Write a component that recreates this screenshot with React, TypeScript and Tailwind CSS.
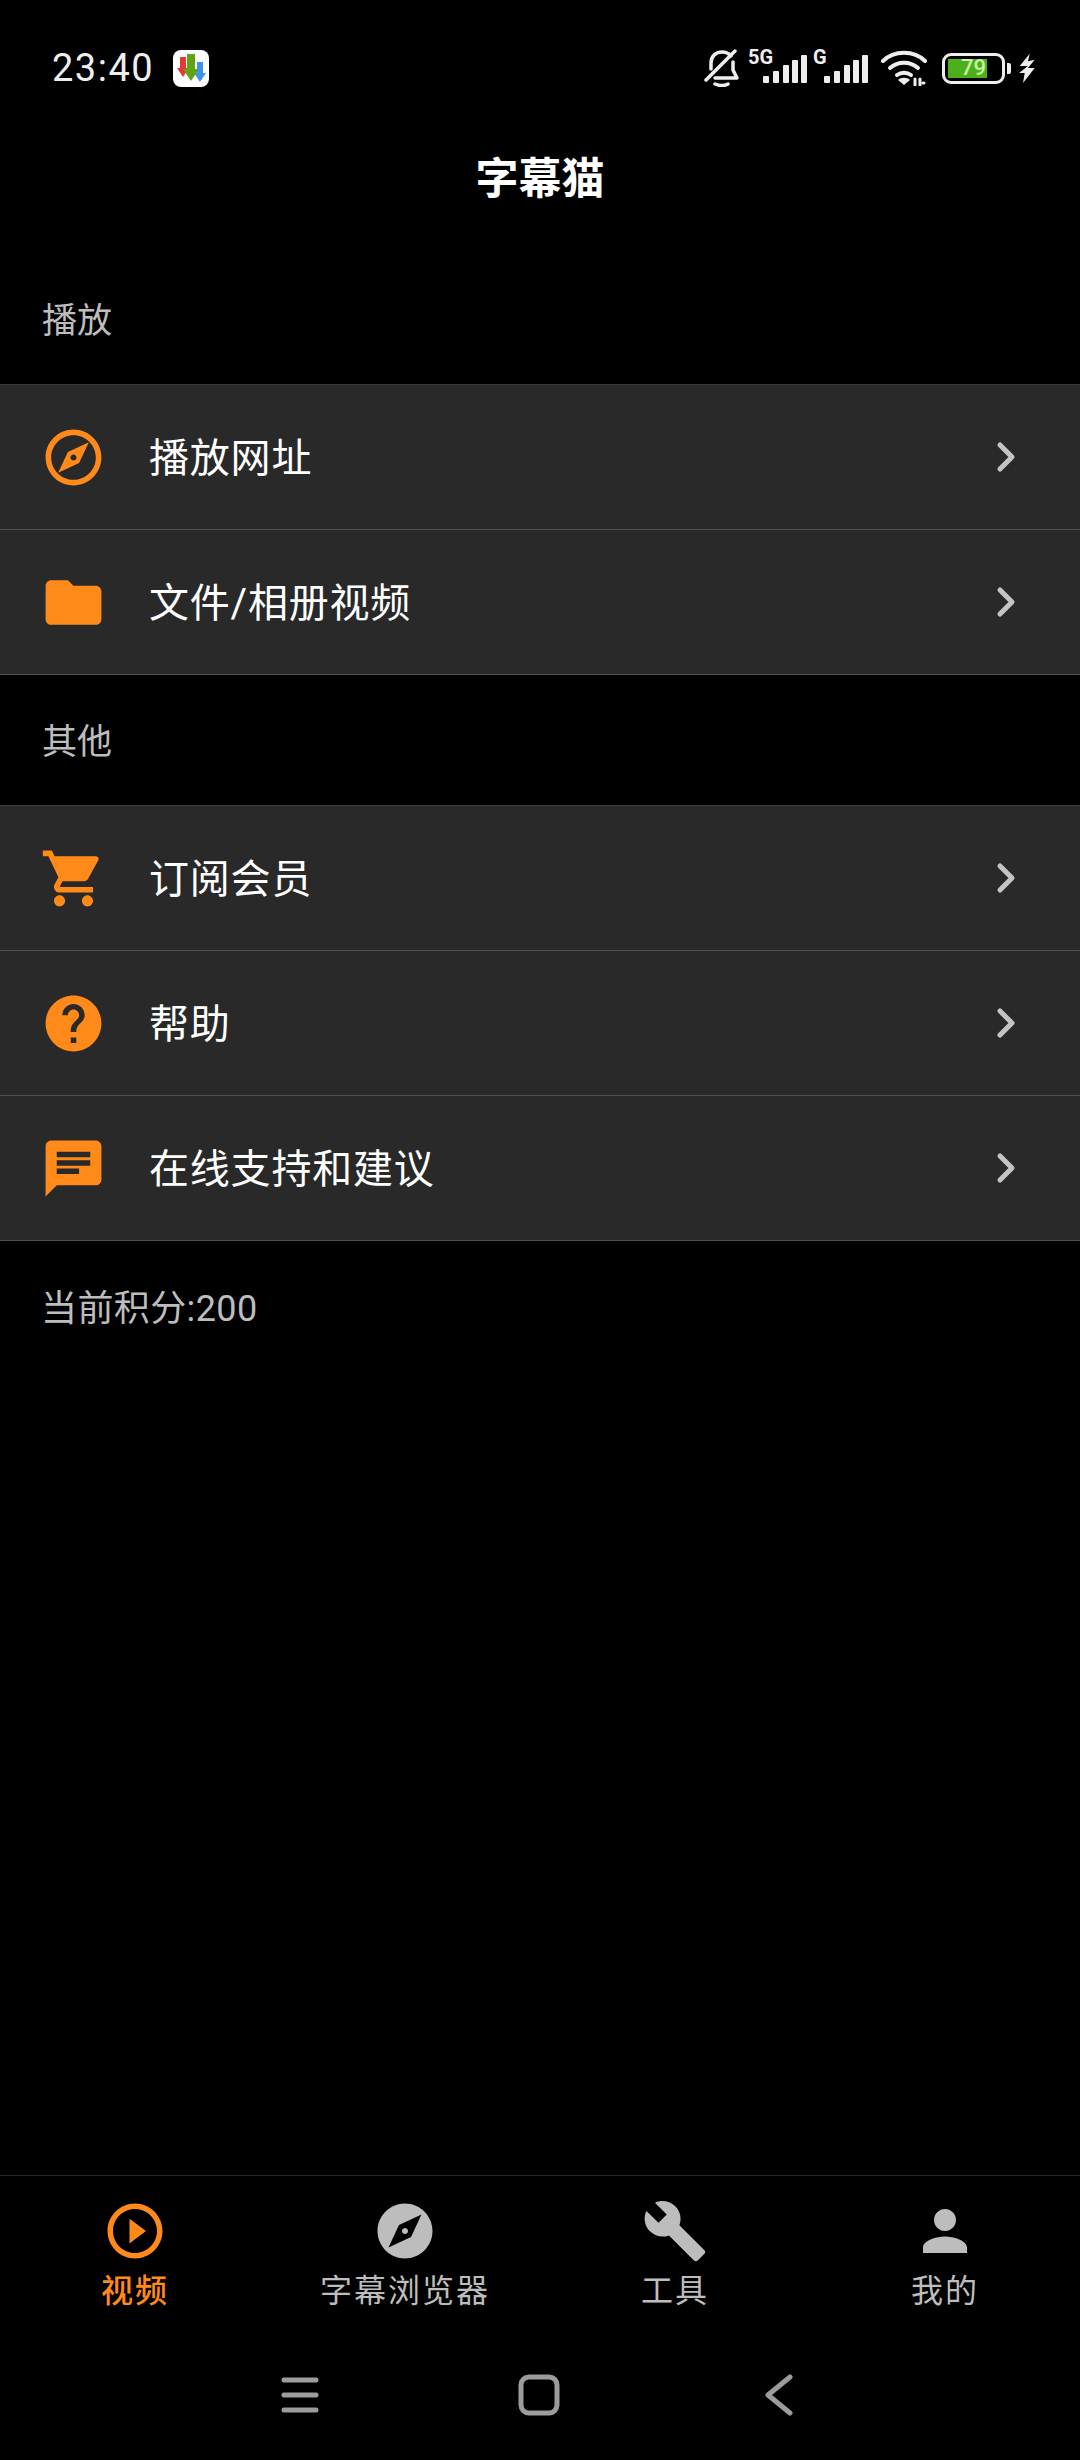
import type { ReactNode } from 'react';

const FONT = 'font-["Roboto","Noto_Sans_CJK_SC",sans-serif]';

const paths = {
  explore:
    'M12 2C6.48 2 2 6.48 2 12s4.48 10 10 10 10-4.48 10-10S17.52 2 12 2zm0 18c-4.41 0-8-3.59-8-8s3.59-8 8-8 8 3.59 8 8-3.59 8-8 8zm-5.5-2.5l7.51-3.49L17.5 6.5 9.99 9.99 6.5 17.5zm5.5-6.6c.61 0 1.1.49 1.1 1.1s-.49 1.1-1.1 1.1-1.1-.49-1.1-1.1.49-1.1 1.1-1.1z',
  exploreFilled:
    'M12 10.9c-.61 0-1.1.49-1.1 1.1s.49 1.1 1.1 1.1c.61 0 1.1-.49 1.1-1.1s-.49-1.1-1.1-1.1zM12 2C6.48 2 2 6.48 2 12s4.48 10 10 10 10-4.48 10-10S17.52 2 12 2zm2.19 12.19L6 18l3.81-8.19L18 6l-3.81 8.19z',
  folder: 'M10 4H4c-1.1 0-1.99.9-1.99 2L2 18c0 1.1.9 2 2 2h16c1.1 0 2-.9 2-2V8c0-1.1-.9-2-2-2h-8l-2-2z',
  cart:
    'M7 18c-1.1 0-1.99.9-1.99 2S5.9 22 7 22s2-.9 2-2-.9-2-2-2zM1 2v2h2l3.6 7.59-1.35 2.45c-.16.28-.25.61-.25.96 0 1.1.9 2 2 2h12v-2H7.42c-.14 0-.25-.11-.25-.25l.03-.12.9-1.63h7.45c.75 0 1.41-.41 1.75-1.03l3.58-6.49c.08-.14.12-.31.12-.48 0-.55-.45-1-1-1H5.21l-.94-2H1zm16 16c-1.1 0-1.99.9-1.99 2s.89 2 1.99 2 2-.9 2-2-.9-2-2-2z',
  help:
    'M12 2C6.48 2 2 6.48 2 12s4.48 10 10 10 10-4.48 10-10S17.52 2 12 2zm1 17h-2v-2h2v2zm2.07-7.75l-.9.92C13.45 12.9 13 13.5 13 15h-2v-.5c0-1.1.45-2.1 1.17-2.83l1.24-1.26c.37-.36.59-.86.59-1.41 0-1.1-.9-2-2-2s-2 .9-2 2H8c0-2.21 1.79-4 4-4s4 1.79 4 4c0 .88-.36 1.68-.93 2.25z',
  chat: 'M20 2H4c-1.1 0-1.99.9-1.99 2L2 22l4-4h14c1.1 0 2-.9 2-2V4c0-1.1-.9-2-2-2zM6 9h12v2H6V9zm8 5H6v-2h8v2zm4-6H6V6h12v2z',
  play:
    'M10 16.5l6-4.5-6-4.5v9zM12 2C6.48 2 2 6.48 2 12s4.48 10 10 10 10-4.48 10-10S17.52 2 12 2zm0 18c-4.41 0-8-3.59-8-8s3.59-8 8-8 8 3.59 8 8-3.59 8-8 8z',
  build:
    'M22.7 19l-9.1-9.1c.9-2.3.4-5-1.5-6.9-2-2-5-2.4-7.4-1.3L9 6 6 9 1.6 4.7C.4 7.1.9 10.1 2.9 12.1c1.9 1.9 4.6 2.4 6.9 1.5l9.1 9.1c.4.4 1 .4 1.4 0l2.3-2.3c.5-.4.5-1.1.1-1.4z',
  person: 'M12 12c2.21 0 4-1.79 4-4s-1.79-4-4-4-4 1.79-4 4 1.79 4 4 4zm0 2c-2.67 0-8 1.34-8 4v2h16v-2c0-2.66-5.33-4-8-4z',
};

function MdIcon({ d, className }: { d: string; className: string }) {
  return (
    <svg viewBox="0 0 24 24" fill="currentColor" className={className}>
      <path d={d} />
    </svg>
  );
}

function Signal({ label, labelClass }: { label: string; labelClass: string }) {
  return (
    <div className="relative w-[44px] h-[36px] mb-[6px]">
      <span className={`absolute top-[0px] text-[20px] leading-[20px] font-bold text-[#eeeeee] ${labelClass}`}>{label}</span>
      <svg viewBox="0 0 44 28" className="absolute bottom-0 left-0 w-[44px] h-[28px]" fill="#eeeeee">
        <rect x="0" y="21" width="6" height="7" rx="1" />
        <rect x="10" y="16" width="6" height="12" rx="1" />
        <rect x="20" y="10" width="6" height="18" rx="1" />
        <rect x="29" y="5" width="6" height="23" rx="1" />
        <rect x="38" y="0" width="6" height="28" rx="1" />
      </svg>
    </div>
  );
}

function StatusBar() {
  return (
    <div className="h-[136px] pl-[52px] pr-[44px] flex items-center justify-between">
      <div className="flex items-center gap-[19px]">
        <span className="text-[38px] leading-none tracking-[1.5px] text-[#eeeeee]">23:40</span>
        <div className="w-[36px] h-[37px] rounded-[8px] bg-white flex items-center justify-center">
          <svg viewBox="0 0 36 37" className="w-[36px] h-[37px]">
            <path d="M7 7h6v11h3l-6 9-6-9h3z" fill="#e53935" />
            <path d="M24 12h6v11h3l-6 9-6-9h3z" fill="#3d93f0" />
            <path d="M14 4h8v15h4l-8 12-8-12h4z" fill="#5fa413" />
          </svg>
        </div>
      </div>
      <div className="flex items-center">
        <svg viewBox="0 0 36 38" className="w-[36px] h-[38px]" fill="none" stroke="#eeeeee" strokeWidth="3.5" strokeLinecap="round" strokeLinejoin="round">
          <path d="M7 20v-6C7 7 12 3 18 3c4 0 7 1.500 9 4" />
          <path d="M29 13v8l4 8H11" />
          <path d="M11 35q7 3 13 0" />
          <path d="M2 31L31 2" />
        </svg>
        <div className="ml-[23px]">
          <Signal label="5G" labelClass="left-[-15px]" />
        </div>
        <div className="ml-[17px]">
          <Signal label="G" labelClass="left-[-11px]" />
        </div>
        <svg viewBox="0 0 46 36" className="ml-[13px] w-[46px] h-[36px]" fill="none" stroke="#eeeeee" strokeLinecap="round">
          <path d="M2 11C13 0 33 0 44 11" strokeWidth="4" />
          <path d="M9 18c8-7 20-7 28 0" strokeWidth="4" />
          <path d="M16 25c4-3 10-3 14 0" strokeWidth="4" />
          <path d="M23 35l-6-5c3-3 9-3 12 0z" fill="#eeeeee" strokeWidth="0" />
          <path d="M34 35v-6M39 35v-6M42 33h1" strokeWidth="3" />
        </svg>
        <div className="ml-[15px] w-[63px] h-[31px] rounded-[9px] border-[3px] border-[#eeeeee] p-[3px] flex">
          <div className="w-[39px] bg-[#4caf1c] flex items-center justify-end pr-[1px]">
            <span className="text-[22px] leading-none font-medium text-[#c9f2a2]">79</span>
          </div>
        </div>
        <div className="ml-[2px] w-[4px] h-[11px] rounded-r-[2px] bg-[#eeeeee]" />
        <svg viewBox="0 0 17 30" className="ml-[8px] w-[17px] h-[30px]" fill="#eeeeee">
          <path d="M10.700.7L.7 13H9l-9 7h5.700L4 30l11.700-15H9l6.700-8.300L9 8.300z" />
        </svg>
      </div>
    </div>
  );
}

function SectionLabel({ children, className }: { children: ReactNode; className: string }) {
  return <div className={`h-[130px] pt-[6px] flex items-center text-[#bdbdbd] ${className}`}>{children}</div>;
}

function Row({ icon, title }: { icon: string; title: string }) {
  return (
    <div className="h-[145px] pl-[40px] pr-[62px] flex items-center border-b border-[#505050]">
      <MdIcon d={icon} className="w-[67px] h-[67px] text-[#ff8a19]" />
      <span className="ml-[42px] pt-[3px] flex-1 text-[40px] tracking-[0.8px] text-white">{title}</span>
      <svg viewBox="0 0 22 32" className="w-[22px] h-[32px]" fill="none" stroke="#c4c4c4" strokeWidth="5" strokeLinecap="round" strokeLinejoin="round">
        <path d="M4 4l12 12L4 28" />
      </svg>
    </div>
  );
}

function Tab({ icon, label, active }: { icon: string; label: string; active?: boolean }) {
  return (
    <div className={`flex-1 flex flex-col items-center ${active ? 'text-[#ff8a19]' : 'text-[#bdbdbd]'}`}>
      <MdIcon d={icon} className="w-[66px] h-[66px]" />
      <span className={`mt-[5px] text-[32px] leading-[44px] tracking-[2px] ${active ? 'font-medium' : ''}`}>{label}</span>
    </div>
  );
}

export default function App() {
  return (
    <div className={`w-[1080px] h-[2460px] bg-black flex flex-col ${FONT}`}>
      <StatusBar />
      <div className="h-[84px] mb-[34px] pt-[3px] flex items-center justify-center text-[43px] font-bold text-white">字幕猫</div>

      <SectionLabel className="pl-[42px] text-[35px]">播放</SectionLabel>
      <div className="bg-[#292929] border-t border-[#3a3a3a]">
        <Row icon={paths.explore} title="播放网址" />
        <Row icon={paths.folder} title="文件/相册视频" />
      </div>

      <SectionLabel className="pl-[42px] text-[35px]">其他</SectionLabel>
      <div className="bg-[#292929] border-t border-[#3a3a3a]">
        <Row icon={paths.cart} title="订阅会员" />
        <Row icon={paths.help} title="帮助" />
        <Row icon={paths.chat} title="在线支持和建议" />
      </div>

      <SectionLabel className="pl-[41px] text-[36px] tracking-[0.4px]">当前积分:200</SectionLabel>

      <div className="flex-1" />

      <div className="h-[165px] pt-[22px] flex border-t border-[#262626]">
        <Tab icon={paths.play} label="视频" active />
        <Tab icon={paths.exploreFilled} label="字幕浏览器" />
        <Tab icon={paths.build} label="工具" />
        <Tab icon={paths.person} label="我的" />
      </div>

      <div className="h-[120px] pb-[10px] pr-[7px] flex items-center justify-center">
        <svg viewBox="0 0 38 38" className="w-[40px] h-[38px]" stroke="#9c9c9c" strokeWidth="5" strokeLinecap="round">
          <path d="M3 4h32M3 19h32M3 34h32" />
        </svg>
        <svg viewBox="0 0 42 42" className="ml-[198px] w-[42px] h-[42px]" fill="none" stroke="#9c9c9c" strokeWidth="5">
          <rect x="3" y="3" width="36" height="36" rx="8" />
        </svg>
        <svg viewBox="0 0 28 42" className="ml-[205px] w-[28px] h-[42px]" fill="none" stroke="#9c9c9c" strokeWidth="5" strokeLinecap="round" strokeLinejoin="round">
          <path d="M25 3L3 21l22 18" />
        </svg>
      </div>
    </div>
  );
}
